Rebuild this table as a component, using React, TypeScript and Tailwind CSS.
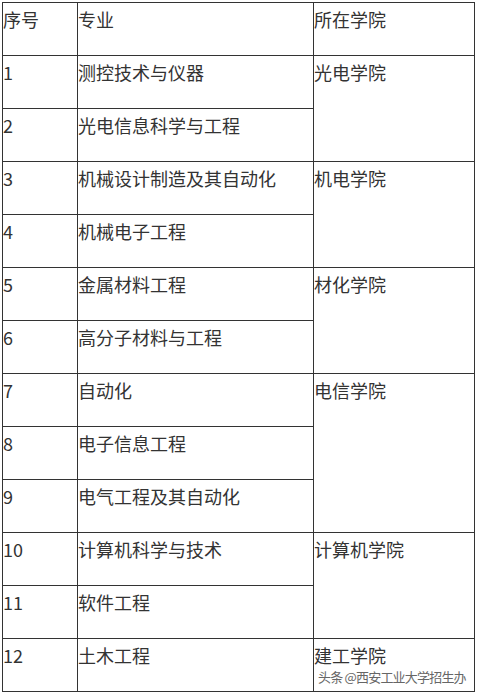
import React from 'react';

type Row = { no: string; major: string; college?: string; span?: number };

const rows: Row[] = [
  { no: '1', major: '测控技术与仪器', college: '光电学院', span: 2 },
  { no: '2', major: '光电信息科学与工程' },
  { no: '3', major: '机械设计制造及其自动化', college: '机电学院', span: 2 },
  { no: '4', major: '机械电子工程' },
  { no: '5', major: '金属材料工程', college: '材化学院', span: 2 },
  { no: '6', major: '高分子材料与工程' },
  { no: '7', major: '自动化', college: '电信学院', span: 3 },
  { no: '8', major: '电子信息工程' },
  { no: '9', major: '电气工程及其自动化' },
  { no: '10', major: '计算机科学与技术', college: '计算机学院', span: 2 },
  { no: '11', major: '软件工程' },
  { no: '12', major: '土木工程', college: '建工学院', span: 1 },
];

const cell = 'border border-[#333] align-top p-0 pt-[3px] leading-[26px]';

export default function App() {
  return (
    <div
      className="relative w-[477px] h-[696px] bg-white p-[2px] text-[18px] text-[#333]"
      style={{ fontFamily: '"Noto Sans CJK SC", "Noto Sans", sans-serif' }}
    >
      <table className="border-collapse w-[472px] table-fixed">
        <colgroup>
          <col className="w-[75px]" />
          <col className="w-[236px]" />
          <col className="w-[161px]" />
        </colgroup>
        <tbody>
          <tr className="h-[53px]">
            <td className={cell}>序号</td>
            <td className={cell}>专业</td>
            <td className={cell}>所在学院</td>
          </tr>
          {rows.map((r) => (
            <tr key={r.no} className="h-[53px]">
              <td className={cell}>{r.no}</td>
              <td className={cell}>{r.major}</td>
              {r.college && (
                <td className={cell} rowSpan={r.span}>
                  {r.college}
                </td>
              )}
            </tr>
          ))}
        </tbody>
      </table>

      {/* 水印 */}
      <div className="absolute left-[318px] top-[668px] text-[13px] leading-[18px] text-[#666] tracking-[-0.8px]">
        头条 @西安工业大学招生办
      </div>
    </div>
  );
}
